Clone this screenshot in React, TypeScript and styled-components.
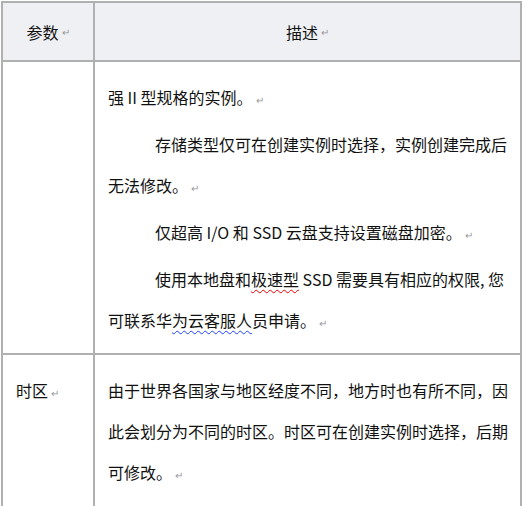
import React from "react";
import styled, { createGlobalStyle } from "styled-components";

const Global = createGlobalStyle`
  html, body { margin: 0; padding: 0; background: #fff; }
  body { font-family: "Noto Sans CJK SC", "Noto Sans", sans-serif; color: #111; }
`;

const Table = styled.div`
  display: grid;
  grid-template-columns: 92px 427px;
  margin: 1px 0 0 1px;
  border-left: 2px solid #b0b0b0;
  border-top: 2px solid #b0b0b0;
  width: 521px;
  box-sizing: border-box;
`;

const Cell = styled.div<{ $head?: boolean; $h: number }>`
  height: ${(p) => p.$h}px;
  box-sizing: border-box;
  background: ${(p) => (p.$head ? "#eff0f4" : "#fff")};
  border-right: 2px solid #b0b0b0;
  border-bottom: 2px solid #b0b0b0;
  font-size: 16px;
  ${(p) =>
    p.$head
      ? "display:flex;align-items:center;justify-content:center;font-size:16px;"
      : ""}
`;

const Body = styled.div<{ $pl: number }>`
  padding: 15px 0 0 ${(p) => p.$pl}px;
`;

const P = styled.p<{ $indent?: boolean }>`
  margin: 0 0 4px;
  line-height: 41px;
  white-space: nowrap;
  text-indent: ${(p) => (p.$indent ? "47px" : "0")};
`;

const Mark = styled.span`
  color: #999;
  font-size: 10px;
  margin-left: 3px;
`;

const Wavy = styled.span<{ $c: string }>`
  text-decoration: underline wavy ${(p) => p.$c};
  text-decoration-thickness: 1px;
  text-underline-offset: 3px;
`;

export default function App() {
  return (
    <>
      <Global />
      <Table>
        <Cell $head $h={59}>参数<Mark>↵</Mark></Cell>
        <Cell $head $h={59}>描述<Mark>↵</Mark></Cell>
        <Cell $h={293} />
        <Cell $h={293}>
          <Body $pl={13}>
            <P>强 II 型规格的实例。<Mark>↵</Mark></P>
            <P $indent>
              存储类型仅可在创建实例时选择，实例创建完成后
              <br />
              无法修改。<Mark>↵</Mark>
            </P>
            <P $indent>仅超高 I/O 和 SSD 云盘支持设置磁盘加密。<Mark>↵</Mark></P>
            <P $indent>
              使用本地盘和<Wavy $c="#e00">极速型</Wavy> SSD 需要具有相应的权限, 您
              <br />
              可联系华<Wavy $c="#2040ff">为云客服人</Wavy>员申请。<Mark>↵</Mark>
            </P>
          </Body>
        </Cell>
        <Cell $h={160}>
          <Body $pl={13}>
            <P>时区<Mark>↵</Mark></P>
          </Body>
        </Cell>
        <Cell $h={160}>
          <Body $pl={13}>
            <P>
              由于世界各国家与地区经度不同，地方时也有所不同，因
              <br />
              此会划分为不同的时区。时区可在创建实例时选择，后期
              <br />
              可修改。<Mark>↵</Mark>
            </P>
          </Body>
        </Cell>
      </Table>
    </>
  );
}
